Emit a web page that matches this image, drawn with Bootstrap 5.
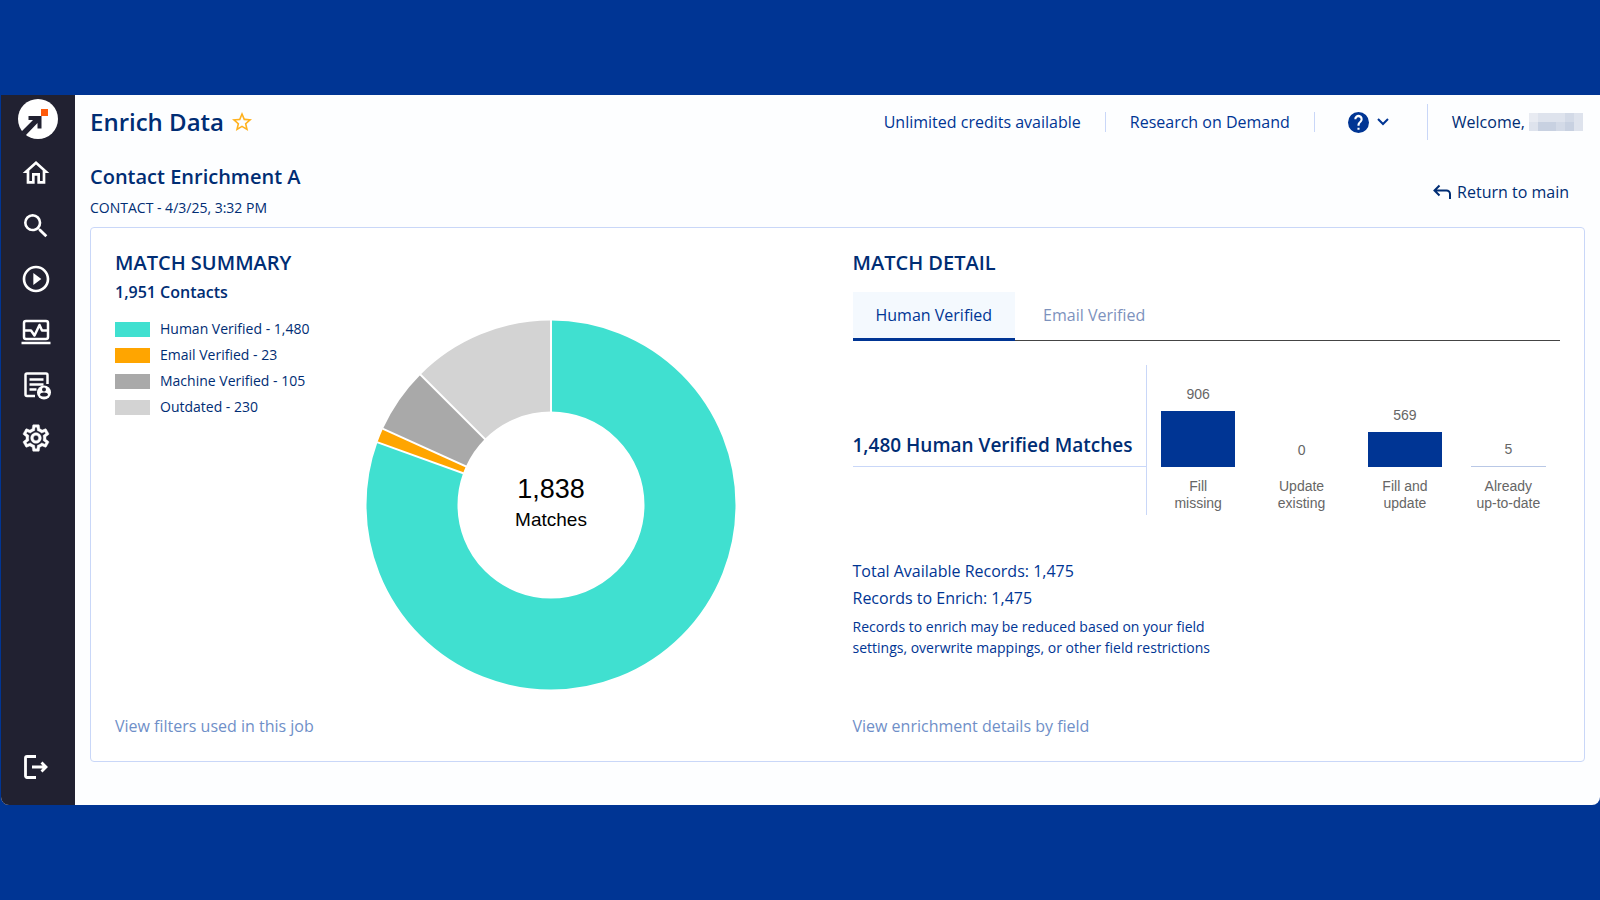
<!DOCTYPE html>
<html lang="en">
<head>
<meta charset="utf-8">
<meta name="viewport" content="width=device-width, initial-scale=1">
<title>Enrich Data</title>
<link rel="stylesheet" href="https://cdn.jsdelivr.net/npm/bootstrap@5.3.0/dist/css/bootstrap.min.css">
<style>
  :root { --brand: #003594; --ink: #002d74; --line: #c9d7f8; --soft: #6f8fc8; }
  body { background: var(--brand); color: var(--ink); font-family: "Open Sans", "Noto Sans", sans-serif; font-size: 16px; line-height: 24px; }
  a { color: inherit; text-decoration: none; }
  h1, h2, h3, p, ul { margin: 0; }
  .app-window { margin: 95px 0 95px 1px; min-height: calc(100vh - 190px); background: #fdfeff; border-radius: 0 0 8px 8px; overflow: hidden; }
  .side-nav { width: 74px; background: #212131; padding: 4px 4px 22px 0; color: #fff; }
  .side-nav a { display: flex; width: 32px; height: 32px; align-items: center; justify-content: center; }
  .side-nav .brand-logo { width: 40px; height: 40px; margin-left: 3px; }
  .side-links { gap: 21px; margin-top: 18px; }
  .content-area { padding: 0 15px 43px; min-width: 0; }
  .top-bar { height: 54px; }
  .title-group { gap: 6px; }
  .page-title { font-size: 24px; line-height: 32px; font-weight: 600; }
  .job-title { font-size: 20px; line-height: 28px; font-weight: 600; }
  .job-meta { font-size: 14px; line-height: 20px; margin-top: 7px; }
  .top-links > * { border-right: 1px solid var(--line); height: 20px; padding: 0 24px; line-height: 18px; display: flex; align-items: center; color: var(--brand); }
  .top-links .help-toggle { height: 36px; padding: 0 37px 0 33px; background: none; border-width: 0 1px 0 0; gap: 7px; }
  .top-links .welcome { border: 0; padding: 0 2px 0 24px; color: var(--ink); }
  .job-row { padding: 14px 0 9px; }
  .return-link { padding: 2px 16px 0 0; gap: 6px; }
  .panel { background: #fff; border: 1px solid var(--line); border-radius: 4px; padding: 20px 24px 23px; }
  .panel .row { --bs-gutter-x: 30px; }
  .section-title { font-size: 20px; line-height: 30px; font-weight: 600; }
  .contact-count { font-weight: 600; font-size: 16px; line-height: 28px; }
  .legend-list { width: 251px; padding-top: 10px; font-size: 14px; line-height: 26px; }
  .legend-list li { display: flex; align-items: center; gap: 10px; }
  .swatch { width: 35px; height: 15px; }
  .donut { width: 370px; height: 370px; margin: 14px 0 24px; font-family: "Liberation Sans", Arial, sans-serif; }
  .soft-link { color: var(--soft); }
  .detail-tabs { border-bottom: 1px solid #444; margin-top: 14px; }
  .detail-tabs .nav-link { border: 0; border-radius: 0; height: 49px; margin-bottom: -1px; padding: 0 23px; color: #7d92bd; border-bottom: 3px solid transparent; }
  .detail-tabs .nav-item + .nav-item .nav-link { padding-left: 28px; }
  .detail-tabs .nav-link.active { color: var(--brand); background: #f4f9fe; border-bottom-color: var(--brand); }
  .chart-block { margin-top: 24px; height: 150px; }
  .chart-title { width: 293px; height: 102px; border-bottom: 1px solid var(--line); padding-bottom: 6px; font-size: 19px; line-height: 30px; font-weight: 600; white-space: nowrap; }
  .bar-chart { border-left: 1px solid var(--line); font: 14px/17px "Liberation Sans", Arial, sans-serif; color: #666; text-align: center; }
  .bar-plot { height: 102px; }
  .bar-fill { width: 72%; background: var(--brand); margin-top: 8px; }
  .bar-name { padding-top: 11px; }
  .totals { margin-top: 43px; line-height: 27px; color: var(--brand); }
  .note { font-size: 14px; line-height: 21px; margin-top: 4px; max-width: 370px; }
  .detail-foot { padding-top: 54px; }
</style>
</head>
<body>
<div class="app-window d-flex">
  <nav class="side-nav d-flex flex-column align-items-center flex-shrink-0" aria-label="Main">
    <a href="#" class="brand-logo" aria-label="Dashboard">
      <svg width="40" height="40" viewBox="0 0 40 40"><circle cx="20" cy="20" r="20" fill="#fff"/><path d="M23 10h7v7h-7z" fill="#ff5a0a"/><path d="M10.500 17H23.500V29.500H19.500V24L7.500 36.500 3.500 32.500 15 21H10.500z" fill="#212131"/></svg>
    </a>
    <div class="side-links d-flex flex-column">
      <a href="#" aria-label="Home"><svg width="32" height="32" viewBox="0 0 24 24" fill="#fff"><path d="M12 5.690l5 4.500V18h-2v-6H9v6H7v-7.810l5-4.500M12 3L2 12h3v8h6v-6h2v6h6v-8h3L12 3z"/></svg></a>
      <a href="#" aria-label="Search"><svg width="32" height="32" viewBox="0 0 24 24" fill="#fff"><path d="M15.500 14h-.79l-.28-.27A6.470 6.470 0 0 0 16 9.500 6.500 6.500 0 1 0 9.500 16c1.610 0 3.090-.59 4.230-1.570l.27.28v.79l5 4.990L20.490 19l-4.990-5zm-6 0C7.010 14 5 11.990 5 9.500S7.010 5 9.500 5 14 7.010 14 9.500 11.990 14 9.500 14z"/></svg></a>
      <a href="#" aria-label="Run"><svg width="32" height="32" viewBox="0 0 24 24" fill="#fff"><path d="M10 16.500l6-4.500-6-4.500v9zM12 2C6.480 2 2 6.480 2 12s4.480 10 10 10 10-4.480 10-10S17.520 2 12 2zm0 18c-4.410 0-8-3.590-8-8s3.590-8 8-8 8 3.590 8 8-3.590 8-8 8z"/></svg></a>
      <a href="#" aria-label="Monitoring"><svg width="32" height="32" viewBox="0 0 32 32" fill="none" stroke="#fff" stroke-width="2.500"><rect x="4" y="5" width="24" height="18" rx="2"/><path d="M4 14.500h7l3.500 5 5-10.500 2.500 5.500h6M1.500 27h29" stroke-linejoin="round"/></svg></a>
      <a href="#" aria-label="Lists"><svg width="32" height="32" viewBox="0 0 32 32" fill="none" stroke="#fff" stroke-width="2.500"><path d="M15 27H7a1.500 1.500 0 0 1-1.500-1.500V6A1.500 1.500 0 0 1 7 4.500h19A1.500 1.500 0 0 1 27.500 6v9M9.500 10.500h14M9.500 15.500h14M9.500 20.500h7"/><circle cx="24" cy="23.500" r="7" fill="#fff" stroke="none"/><circle cx="24" cy="20.500" r="2" fill="#212131" stroke="none"/><path d="M20 26c0-3.200 8-3.200 8 0-1.500 2-6.500 2-8 0z" fill="#212131" stroke="none"/></svg></a>
      <a href="#" aria-label="Settings"><svg width="32" height="32" viewBox="0 0 24 24" fill="#fff"><path d="M19.430 12.980c.04-.32.07-.64.07-.98 0-.34-.03-.66-.07-.98l2.110-1.650c.19-.15.24-.42.12-.64l-2-3.460c-.09-.16-.26-.25-.44-.25-.06 0-.12.010-.17.030l-2.490 1c-.52-.4-1.080-.73-1.690-.98l-.38-2.650C14.460 2.180 14.250 2 14 2h-4c-.25 0-.46.180-.49.420l-.38 2.650c-.61.250-1.170.59-1.690.98l-2.490-1c-.06-.02-.12-.03-.18-.03-.17 0-.34.090-.43.250l-2 3.460c-.13.220-.07.490.12.640l2.110 1.650c-.04.320-.07.650-.07.980 0 .33.030.66.070.98l-2.110 1.650c-.19.150-.24.420-.12.640l2 3.460c.09.160.26.250.44.250.06 0 .12-.01.17-.03l2.490-1c.52.400 1.080.73 1.690.98l.38 2.650c.03.240.24.420.49.420h4c.25 0 .46-.18.49-.42l.38-2.650c.61-.25 1.170-.59 1.690-.98l2.490 1c.06.020.12.030.18.030.17 0 .34-.09.43-.25l2-3.460c.12-.22.070-.49-.12-.64l-2.110-1.650zm-1.980-1.710c.04.310.05.520.05.730 0 .21-.02.430-.05.730l-.14 1.130.89.700 1.080.84-.7 1.210-1.270-.51-1.040-.42-.9.680c-.43.320-.84.560-1.250.73l-1.060.43-.16 1.130-.2 1.350h-1.400l-.19-1.350-.16-1.130-1.060-.43c-.43-.18-.83-.41-1.230-.71l-.91-.7-1.060.43-1.270.51-.7-1.210 1.080-.84.89-.7-.14-1.130c-.03-.31-.05-.54-.05-.74s.02-.43.050-.73l.14-1.130-.89-.7-1.080-.84.7-1.210 1.270.51 1.040.42.900-.68c.43-.32.84-.56 1.250-.73l1.060-.43.16-1.130.2-1.350h1.390l.19 1.350.16 1.130 1.060.43c.43.180.83.410 1.230.71l.91.700 1.060-.43 1.270-.51.700 1.210-1.070.85-.89.700.14 1.130zM12 8c-2.210 0-4 1.790-4 4s1.790 4 4 4 4-1.790 4-4-1.790-4-4-4zm0 6c-1.100 0-2-.9-2-2s.9-2 2-2 2 .9 2 2-.9 2-2 2z" stroke="#fff" stroke-width=".3"/></svg></a>
    </div>
    <a href="#" class="mt-auto" aria-label="Log out"><svg width="32" height="32" viewBox="0 0 32 32" fill="none" stroke="#fff" stroke-width="2.800"><path d="M16 5.500H7A1.500 1.500 0 0 0 5.500 7v18A1.500 1.500 0 0 0 7 26.500H16M12 16H26M21.500 11.500l4.500 4.500-4.500 4.500"/></svg></a>
  </nav>

  <main class="content-area flex-grow-1">
    <header class="top-bar d-flex align-items-center justify-content-between">
      <div class="title-group d-flex align-items-center">
        <h1 class="page-title">Enrich Data</h1>
        <button type="button" class="btn p-0 border-0 d-flex" aria-label="Add to favourites"><svg width="24" height="24" viewBox="0 0 24 24" fill="#ffb21f"><path d="M22 9.240l-7.190-.62L12 2 9.190 8.630 2 9.240l5.460 4.730L5.820 21 12 17.270 18.180 21l-1.630-7.030L22 9.240zM12 15.400l-3.760 2.270 1-4.280-3.320-2.880 4.380-.38L12 6.100l1.710 4.040 4.380.38-3.320 2.880 1 4.280L12 15.400z"/></svg></button>
      </div>
      <div class="top-links d-flex align-items-center">
        <span>Unlimited credits available</span>
        <a href="#">Research on Demand</a>
        <button type="button" class="help-toggle" aria-label="Help">
          <svg width="21" height="21" viewBox="2 2 20 20" fill="#003594"><path d="M12 2a10 10 0 1 0 0 20 10 10 0 0 0 0-20zm1 17h-2v-2h2v2zm2.070-7.750l-.9.920C13.450 12.900 13 13.500 13 15h-2v-.5c0-1.100.45-2.100 1.170-2.830l1.240-1.260A2 2 0 1 0 10 9H8a4 4 0 1 1 7.070 2.250z"/></svg>
          <svg width="14" height="10" viewBox="0 0 14 10" fill="none" stroke="#003594" stroke-width="2"><path d="M2 2l5 5 5-5"/></svg>
        </button>
        <span class="welcome">Welcome,&nbsp;<svg width="54" height="18" viewBox="0 0 54 18" shape-rendering="crispEdges"><path d="M0 0h54v18H0z" fill="#dee3ed"/><path d="M0 0h9v9H0z" fill="#e8ebf2"/><path d="M9 9h18v9H9zM36 9h9v9h-9z" fill="#c8d1e1"/><path d="M27 9h9v9h-9zM36 0h9v9h-9z" fill="#d3dae7"/></svg></span>
      </div>
    </header>

    <div class="job-row d-flex align-items-center justify-content-between">
      <div>
        <h2 class="job-title">Contact Enrichment A</h2>
        <p class="job-meta">CONTACT - 4/3/25, 3:32 PM</p>
      </div>
      <a href="#" class="return-link d-flex align-items-center"><svg width="18" height="16" viewBox="0 0 18 16" fill="none" stroke="#002d74" stroke-width="2"><path d="M6.500 1.500L1.500 6.500l5 5M1.500 6.500H13.500a3.500 3.500 0 0 1 3.500 3.500v5"/></svg>Return to main</a>
    </div>

    <section class="panel">
      <div class="row">
        <div class="col-6 d-flex flex-column">
          <h2 class="section-title">MATCH SUMMARY</h2>
          <p class="contact-count">1,951 Contacts</p>
          <div class="d-flex">
            <ul class="legend-list list-unstyled flex-shrink-0">
              <li><span class="swatch" style="background:#40e0d0"></span>Human Verified - 1,480</li>
              <li><span class="swatch" style="background:#ffa500"></span>Email Verified - 23</li>
              <li><span class="swatch" style="background:#a9a9a9"></span>Machine Verified - 105</li>
              <li><span class="swatch" style="background:#d3d3d3"></span>Outdated - 230</li>
            </ul>
            <svg class="donut" viewBox="0 0 370 370" role="img" aria-label="1,838 matches by verification type">
              <g fill="none" stroke-width="91" transform="rotate(-90 185 185)">
                <circle cx="185" cy="185" r="139" pathLength="1838" stroke="#40e0d0" stroke-dasharray="1480 358"/>
                <circle cx="185" cy="185" r="139" pathLength="1838" stroke="#ffa500" stroke-dasharray="23 1815" stroke-dashoffset="-1480"/>
                <circle cx="185" cy="185" r="139" pathLength="1838" stroke="#a9a9a9" stroke-dasharray="105 1733" stroke-dashoffset="-1503"/>
                <circle cx="185" cy="185" r="139" pathLength="1838" stroke="#d3d3d3" stroke-dasharray="230 1608" stroke-dashoffset="-1608"/>
              </g>
              <g stroke="#fff" stroke-width="2">
                <path d="M185 185V0"/>
                <path d="M185 185V0" transform="rotate(-45.05 185 185)"/>
                <path d="M185 185V0" transform="rotate(-65.61 185 185)"/>
                <path d="M185 185V0" transform="rotate(-70.12 185 185)"/>
              </g>
              <g text-anchor="middle" fill="#000"><text x="185" y="178" font-size="27">1,838</text><text x="185" y="206" font-size="19">Matches</text></g>
            </svg>
          </div>
          <a href="#" class="soft-link mt-auto align-self-start">View filters used in this job</a>
        </div>

        <div class="col-6 d-flex flex-column">
          <h2 class="section-title">MATCH DETAIL</h2>
          <ul class="nav nav-tabs detail-tabs" role="tablist">
            <li class="nav-item"><button type="button" class="nav-link active" role="tab" aria-selected="true">Human Verified</button></li>
            <li class="nav-item"><button type="button" class="nav-link" role="tab" aria-selected="false">Email Verified</button></li>
          </ul>
          <div class="chart-block d-flex">
            <h3 class="chart-title d-flex align-items-end flex-shrink-0">1,480 Human Verified Matches</h3>
            <div class="bar-chart d-flex flex-grow-1">
              <div class="col-3"><div class="bar-plot d-flex flex-column align-items-center justify-content-end">906<div class="bar-fill" style="height:56px"></div></div><div class="bar-name">Fill<br>missing</div></div>
              <div class="col-3"><div class="bar-plot d-flex flex-column align-items-center justify-content-end">0<div class="bar-fill" style="height:0"></div></div><div class="bar-name">Update<br>existing</div></div>
              <div class="col-3"><div class="bar-plot d-flex flex-column align-items-center justify-content-end">569<div class="bar-fill" style="height:35px"></div></div><div class="bar-name">Fill and<br>update</div></div>
              <div class="col-3"><div class="bar-plot d-flex flex-column align-items-center justify-content-end">5<div class="bar-fill" style="height:1px;background:#b9c8e6"></div></div><div class="bar-name">Already<br>up-to-date</div></div>
            </div>
          </div>
          <div class="totals">
            <p>Total Available Records: 1,475</p>
            <p>Records to Enrich: 1,475</p>
            <p class="note">Records to enrich may be reduced based on your field settings, overwrite mappings, or other field restrictions</p>
          </div>
          <div class="detail-foot mt-auto"><a href="#" class="soft-link">View enrichment details by field</a></div>
        </div>
      </div>
    </section>
  </main>
</div>
<script src="https://cdn.jsdelivr.net/npm/bootstrap@5.3.0/dist/js/bootstrap.bundle.min.js"></script>
</body>
</html>
